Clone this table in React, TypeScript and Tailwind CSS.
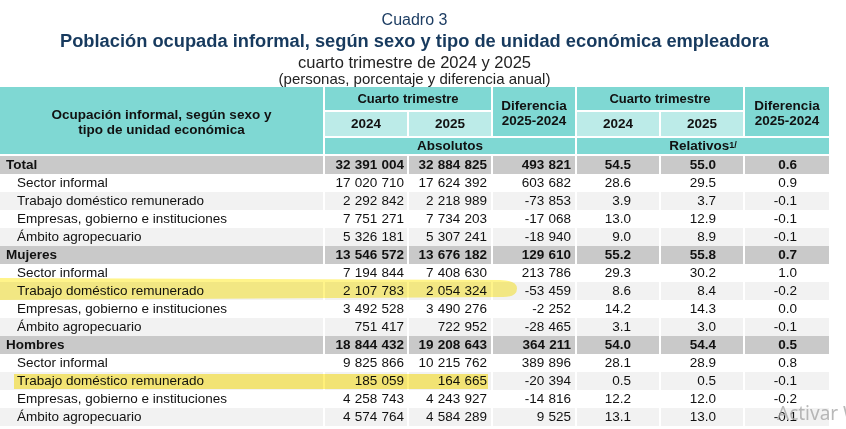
import React from "react";

type Row = { label: string; v: string[]; kind: "total" | "white" | "light" };

const rows: Row[] = [
  { label: "Total", v: ["32 391 004", "32 884 825", "493 821", "54.5", "55.0", "0.6"], kind: "total" },
  { label: "Sector informal", v: ["17 020 710", "17 624 392", "603 682", "28.6", "29.5", "0.9"], kind: "white" },
  { label: "Trabajo doméstico remunerado", v: ["2 292 842", "2 218 989", "-73 853", "3.9", "3.7", "-0.1"], kind: "light" },
  { label: "Empresas, gobierno e instituciones", v: ["7 751 271", "7 734 203", "-17 068", "13.0", "12.9", "-0.1"], kind: "white" },
  { label: "Ámbito agropecuario", v: ["5 326 181", "5 307 241", "-18 940", "9.0", "8.9", "-0.1"], kind: "light" },
  { label: "Mujeres", v: ["13 546 572", "13 676 182", "129 610", "55.2", "55.8", "0.7"], kind: "total" },
  { label: "Sector informal", v: ["7 194 844", "7 408 630", "213 786", "29.3", "30.2", "1.0"], kind: "white" },
  { label: "Trabajo doméstico remunerado", v: ["2 107 783", "2 054 324", "-53 459", "8.6", "8.4", "-0.2"], kind: "light" },
  { label: "Empresas, gobierno e instituciones", v: ["3 492 528", "3 490 276", "-2 252", "14.2", "14.3", "0.0"], kind: "white" },
  { label: "Ámbito agropecuario", v: ["751 417", "722 952", "-28 465", "3.1", "3.0", "-0.1"], kind: "light" },
  { label: "Hombres", v: ["18 844 432", "19 208 643", "364 211", "54.0", "54.4", "0.5"], kind: "total" },
  { label: "Sector informal", v: ["9 825 866", "10 215 762", "389 896", "28.1", "28.9", "0.8"], kind: "white" },
  { label: "Trabajo doméstico remunerado", v: ["185 059", "164 665", "-20 394", "0.5", "0.5", "-0.1"], kind: "light" },
  { label: "Empresas, gobierno e instituciones", v: ["4 258 743", "4 243 927", "-14 816", "12.2", "12.0", "-0.2"], kind: "white" },
  { label: "Ámbito agropecuario", v: ["4 574 764", "4 584 289", "9 525", "13.1", "13.0", "-0.1"], kind: "light" },
];

const cols = "grid grid-cols-[323px_82px_82px_82px_82px_82px_84px] gap-x-[2px]";
const valPad = ["pr-[3px]", "pr-[4px]", "pr-[4px]", "pr-[28px]", "pr-[27px]", "pr-[32px]"];

function DataRow({ r }: { r: Row }) {
  const bg = r.kind === "total" ? "bg-[#c9c9c9]" : r.kind === "light" ? "bg-[#f2f2f2]" : "bg-white";
  const bold = r.kind === "total" ? "font-bold" : "";
  return (
    <div className={`${cols} h-[18px] leading-[18px] text-[13.5px]`}>
      <div className={`${bg} ${bold} ${r.kind === "total" ? "pl-[6px]" : "pl-[17px]"} whitespace-nowrap`}>{r.label}</div>
      {r.v.map((x, i) => (
        <div key={i} className={`${bg} ${bold} text-right ${valPad[i]} whitespace-nowrap ${i < 3 ? "[word-spacing:0.5px]" : ""}`}>
          {x}
        </div>
      ))}
    </div>
  );
}

export default function App() {
  const teal = "bg-[#7fd8d3]";
  const light = "bg-[#bcebe8]";
  return (
    <div className="relative w-[846px] h-[429px] overflow-hidden bg-white text-[#111] text-[13px]" style={{ fontFamily: '"Liberation Sans", Arial, sans-serif' }}>
      <div className="w-[829px] text-center pt-[11px]">
        <div className="text-[16px] leading-[18px] text-[#1d3d63]">Cuadro 3</div>
        <div className="text-[18.3px] leading-[24px] font-bold text-[#173a5e] whitespace-nowrap">
          Población ocupada informal, según sexo y tipo de unidad económica empleadora
        </div>
        <div className="text-[16.5px] leading-[18px] text-[#222]">cuarto trimestre de 2024 y 2025</div>
        <div className="text-[15px] leading-[15px] text-[#222]">(personas, porcentaje y diferencia anual)</div>
      </div>

      <div className="mt-[1px] w-[829px]">
        <div className="grid grid-cols-[323px_82px_82px_82px_82px_82px_84px] grid-rows-[23px_24px_16px] gap-[2px] font-bold">
          <div className={`${teal} col-start-1 row-start-1 row-span-3 flex items-center justify-center text-center leading-[15px] pt-[2px] text-[13.5px]`}>
            Ocupación informal, según sexo y<br />tipo de unidad económica
          </div>
          <div className={`${teal} col-start-2 col-span-2 row-start-1 flex items-center justify-center`}>Cuarto trimestre</div>
          <div className={`${teal} col-start-4 row-start-1 row-span-2 flex items-center justify-center text-center leading-[15px] pt-[2px] text-[13.5px]`}>
            Diferencia<br />2025-2024
          </div>
          <div className={`${teal} col-start-5 col-span-2 row-start-1 flex items-center justify-center`}>Cuarto trimestre</div>
          <div className={`${teal} col-start-7 row-start-1 row-span-2 flex items-center justify-center text-center leading-[15px] pt-[2px] text-[13.5px]`}>
            Diferencia<br />2025-2024
          </div>
          <div className={`${light} col-start-2 row-start-2 flex items-center justify-center text-[13.5px]`}>2024</div>
          <div className={`${light} col-start-3 row-start-2 flex items-center justify-center text-[13.5px]`}>2025</div>
          <div className={`${light} col-start-5 row-start-2 flex items-center justify-center text-[13.5px]`}>2024</div>
          <div className={`${light} col-start-6 row-start-2 flex items-center justify-center text-[13.5px]`}>2025</div>
          <div className={`${teal} col-start-2 col-span-3 row-start-3 flex items-center justify-center leading-[16px] text-[13.5px]`}>Absolutos</div>
          <div className={`${teal} col-start-5 col-span-3 row-start-3 flex items-center justify-center leading-[16px] text-[13.5px]`}>
            Relativos<sup className="text-[9px] leading-none relative -top-[1px]">1/</sup>
          </div>
        </div>
        <div className="mt-[2px]">
          {rows.map((r, i) => (
            <DataRow key={i} r={r} />
          ))}
        </div>
      </div>

      <svg className="absolute left-0 top-0 pointer-events-none mix-blend-multiply" width="846" height="429">
        <path d="M0,278 L500,280 Q517,280.5 517,288.5 Q517,297 503,297 L0,300 Z" fill="#fff48a" />
        <rect x="14" y="374" width="474" height="15" fill="#fff07a" />
      </svg>

      <div className="absolute left-[777px] top-[402px] text-[19px] leading-[22px] text-[#a8a8a8] opacity-80 whitespace-nowrap" style={{ fontFamily: '"Noto Sans", sans-serif' }}>
        Activar W
      </div>
    </div>
  );
}
